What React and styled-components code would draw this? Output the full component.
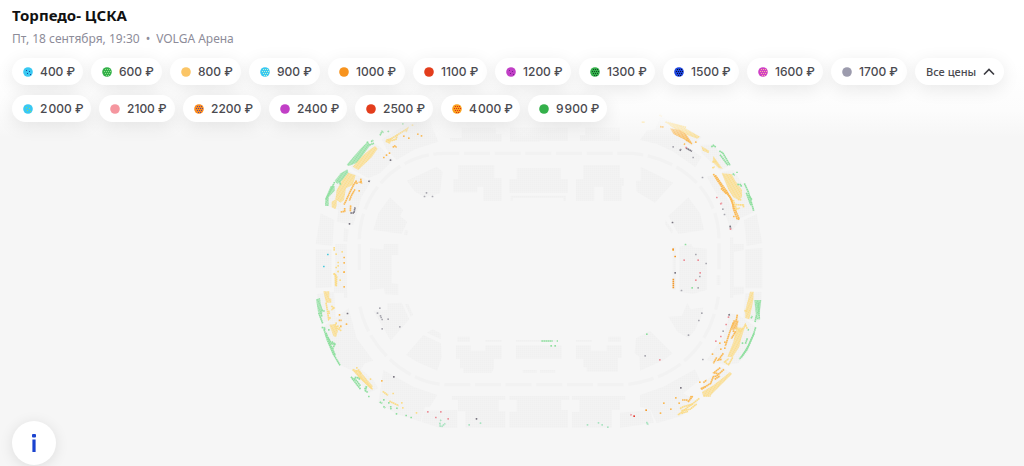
import React from "react";
import styled, { createGlobalStyle } from "styled-components";

const GlobalStyle = createGlobalStyle`
  * { box-sizing: border-box; }
  body {
    margin: 0;
    background: #f6f6f6;
    font-family: "Noto Sans", "Open Sans", sans-serif;
    color: #111;
  }
`;

const Page = styled.main`
  display: grid;
  min-height: 100vh;
  > * { grid-area: 1 / 1; }
`;

const MapArea = styled.section`
  display: flex;
  justify-content: center;
  align-items: flex-start;
  padding: 110px 0 0 56px;
`;

const Arena = styled.svg`
  width: 480px;
  height: auto;
  flex: none;
`;

const Header = styled.header`
  align-self: start;
  z-index: 1;
  padding: 4px 12px 16px;
  background: linear-gradient(#fff 0%, #fff 45%, #fcfcfc 80%, rgba(246, 246, 246, 0) 100%);
`;

const Title = styled.h1`
  margin: 0;
  font-size: 15px;
  line-height: 22px;
  font-weight: 700;
`;

const Details = styled.p`
  display: flex;
  gap: 6px;
  margin: 0 0 8px;
  padding-top: 2px;
  font-size: 12px;
  line-height: 22px;
  color: #8d8c99;
`;

const Prices = styled.div`
  display: flex;
  flex-wrap: wrap;
  gap: 10px 8px;
`;

const Chip = styled.button`
  display: flex;
  align-items: center;
  gap: 7px;
  width: ${(p) => p.$width}px;
  height: 27px;
  padding: 0 0 0 11px;
  border: 0;
  border-radius: 14px;
  background: #fff;
  box-shadow: 0 4px 18px rgba(0, 0, 0, 0.09);
  font: 500 12px/20px Inter, "Noto Sans", sans-serif;
  color: #4a4a50;
  white-space: nowrap;
  cursor: pointer;
`;

const AllPrices = styled(Chip)`
  font: 500 11px/20px "Noto Sans", "Open Sans", sans-serif;
`;

const Swatch = styled.svg`
  width: 10px;
  height: 10px;
  flex: none;
`;

const Chevron = styled.svg`
  width: 12px;
  height: 8px;
  flex: none;
`;

const InfoButton = styled.button`
  align-self: end;
  z-index: 1;
  display: flex;
  align-items: center;
  justify-content: center;
  width: 44px;
  height: 44px;
  margin: 0 0 1px 12px;
  padding: 0;
  border: 0;
  border-radius: 50%;
  background: #fff;
  box-shadow: 0 2px 14px rgba(0, 0, 0, 0.1);
  cursor: pointer;
`;

const prices = [
  ["400", 71, "#38c8f2", "#17459b", 1],
  ["600", 71, "#34b04a", "#8fe08a", 2],
  ["800", 71, "#fbc566"],
  ["900", 71, "#38c8f2", "#c4f4cf", 2],
  ["1000", 77, "#f7931e"],
  ["1100", 74, "#e33d1c"],
  ["1200", 76, "#c13fc6", "#74238c", 1],
  ["1300", 76, "#34b04a", "#0f4a24", 2],
  ["1500", 76, "#1b43dc", "#0b1030", 2],
  ["1600", 76, "#cf3fc6", "#fbb49a", 2],
  ["1700", 76, "#9c9bad"],
];

const morePrices = [
  ["2 000", 79, "#38c8f2", "#8fdc6c", 1],
  ["2100", 76, "#f5969f"],
  ["2200", 78, "#f98a1e", "#5b4a90", 2],
  ["2400", 78, "#c13fc6"],
  ["2500", 78, "#e33d1c"],
  ["4 000", 79, "#f9a11e", "#dc2c1c", 2],
  ["9 900", 79, "#34b04a"],
];

const specks = {
  1: [[3, 3], [6, 4], [4, 6.5], [7, 7]],
  2: [[3, 2], [5, 2], [7, 2], [2, 4], [4, 4], [6, 4], [8, 4], [3, 6], [5, 6], [7, 6], [4, 8], [6, 8]],
};

function PriceChip({ item }) {
  const [label, width, color, speck, density] = item;
  return (
    <Chip type="button" $width={width}>
      <Swatch viewBox="0 0 10 10" aria-hidden="true">
        <circle cx="5" cy="5" r="4.8" fill={color} />
        {speck && specks[density].map(([x, y]) => (
          <rect key={`${x}-${y}`} x={Math.floor(x)} y={Math.floor(y)} width="1" height="1" fill={speck} />
        ))}
      </Swatch>
      {label.replace(" ", "\u200a")} ₽
    </Chip>
  );
}

const tones = {
  green: "#8fdf9f",
  yellow: "#fbdc88",
  orange: "#fab954",
  amber: "#f2982b",
  grey: "#a9a8b0",
  dark: "#7a7681",
  red: "#ec8f98",
  scarlet: "#e5392d",
  cyan: "#4cc9dd",
  mint: "#a9e3c1",
};

/* Each quarter of the hall: closed sections, filled seat blocks, seat rows and single seats. */
const quarters = [
  {
    at: [0, 0],
    angle: -56,
    sections: [
      "245,88 300,55 385,20 415,95 345,118 290,150 262,122",
      "150,165 215,95 240,110 280,150 240,190 205,205 160,180",
      "75,285 95,235 140,180 212,215 185,260 160,345 110,335 115,300",
      "62,310 103,330 97,408 47,402",
      "47,418 95,418 95,495 47,495",
      "105,402 140,402 140,495 105,495",
      "132,355 146,358 142,396 130,394",
      "320,212 410,170 428,185 420,250 375,262 345,245",
      "270,262 310,300 300,318 322,335 305,372 220,360 235,310",
      "315,360 325,362 322,376 312,374",
      "210,415 250,418 252,402 295,402 295,435 275,435 275,495 210,495",
      "475,165 583,165 583,205 605,205 605,272 550,272 550,230 532,230 532,247 460,247 460,207 475,207",
      "650,175 720,175 720,248 628,248 628,207 650,207",
      "632,257 720,257 720,264 638,264 638,272 632,272",
      "485,52 588,52 588,72 605,72 605,95 450,95 450,84 485,84",
      "630,52 720,52 720,95 630,95",
    ],
    blocks: [
      ["green", "180,118 202,96 212,104 172,158 146,168 140,164"],
      ["yellow", "205,122 225,108 233,116 215,142 175,180 158,170 185,140"],
      ["green", "122,190 142,178 145,188 128,210 112,222 104,212"],
      ["green", "92,228 104,228 104,242 86,262 86,288 75,288 76,265"],
      ["yellow", "145,188 167,196 158,225 138,235 132,270 122,278 106,268 110,240 125,212"],
      ["yellow", "95,275 110,266 110,285 106,298 95,292"],
      ["yellow", "258,88 276,84 270,102 256,96"],
    ],
    rows: [
      ["green", "200,96 206,98"], ["green", "213,95 220,91"], ["green", "208,105 222,100"],
      ["green", "104,216 92,240 78,270"],
      ["green", "240,76 246,64 251,68"], ["green", "263,66 267,62"], ["green", "118,212 122,225"],
      ["yellow", "264,92 290,76 322,56 318,66"], ["yellow", "274,92 288,88 292,75"],
      ["orange", "278,112 284,108 290,112"], ["orange", "182,206 184,218 176,216"],
      ["orange", "160,226 168,214 172,222"], ["orange", "160,226 148,250 138,272 132,284"],
      ["orange", "165,238 155,255 148,272"], ["orange", "152,286 151,305"],
      ["orange", "122,306 134,304 134,294"], ["dark", "206,216 209,210"],
      ["dark", "151,309 162,309 165,292"],
    ],
    seats: {
      green: [[309, 42]],
      yellow: [[338, 46], [103, 414], [103, 420], [109, 433], [127, 426], [109, 473], [115, 458], [115, 468], [115, 485], [103, 493]],
      orange: [[312, 79], [327, 85], [354, 73], [365, 78], [252, 143], [260, 136], [269, 130], [178, 243], [133, 443], [133, 459], [133, 487]],
      dark: [[272, 151], [149, 342]],
      grey: [[374, 260], [398, 260], [380, 249]],
      cyan: [[84, 434], [72, 470]],
    },
  },
  {
    at: [720, 0],
    angle: 60,
    sections: [
      "345,58 362,20 440,55 485,82 455,108 425,100 340,100 300,90 320,62",
      "330,92 425,100 485,140 466,172 400,125",
      "480,104 520,104 572,165 540,182 485,130",
      "545,185 580,180 620,240 645,305 600,325 570,270",
      "500,200 520,195 600,330 575,365 540,270",
      "612,330 650,312 667,400 620,408",
      "616,418 667,414 667,495 616,495",
      "580,402 612,402 612,420 582,426 582,495 570,495 570,382 580,382",
      "302,170 400,218 375,245 345,278 290,245 288,212 302,212",
      "445,262 480,310 492,360 415,372 385,318",
      "376,330 398,360 396,372 375,342",
      "418,410 455,402 458,412 500,416 500,495 418,495",
      "398,410 408,410 408,495 398,495",
      "0,175 62,175 62,207 84,207 84,248 0,248",
      "0,257 78,257 78,272 70,272 70,264 0,264",
      "130,165 240,165 240,205 252,205 252,228 245,228 245,272 190,272 190,230 163,230 163,272 108,272 108,207 130,207",
      "0,52 84,52 84,92 0,92",
      "135,52 240,52 240,92 120,92 120,75 135,75",
    ],
    blocks: [
      ["yellow", "376,36 420,46 480,80 472,86 440,74 400,54"],
      ["orange", "390,55 420,60 438,72 456,98 440,92 400,72"],
      ["yellow", "484,108 508,122 506,130 488,122"],
      ["yellow", "520,138 548,176 536,174 518,155"],
      ["yellow", "545,190 575,192 586,212 606,240 606,262 596,270 580,262 566,240"],
    ],
    rows: [
      ["yellow", "358,15 366,19"], ["yellow", "376,36 400,42 438,52"],
      ["orange", "360,50 371,51"], ["orange", "432,101 435,104"], ["orange", "438,90 456,101"], ["orange", "465,96 471,97"],
      ["green", "514,111 520,106 528,112"], ["green", "538,123 548,128 570,166"], ["green", "540,134 564,166"],
      ["green", "578,191 584,196"], ["green", "591,185 591,189"], ["green", "592,223 603,224 604,231"],
      ["green", "613,220 625,246 641,302"], ["green", "619,248 633,286"], ["green", "626,255 636,270"],
      ["yellow", "517,156 528,154"], ["yellow", "517,174 524,170"],
      ["orange", "520,192 546,232 570,262 598,328"], ["orange", "526,196 560,244 576,270"], ["orange", "543,235 560,252"],
      ["orange", "576,270 580,295 591,326 598,328"],
      ["yellow", "580,270 590,300"], ["yellow", "594,268 604,270"], ["yellow", "588,284 610,285 611,293"], ["yellow", "586,298 600,294"],
      ["dark", "438,114 456,124"], ["dark", "419,122 424,117"], ["red", "541,283 546,278"], ["dark", "570,347 572,356"],
    ],
    seats: {
      yellow: [[308, 37], [312, 37]],
      orange: [[400, 421], [582, 320]],
      amber: [[400, 418], [406, 440], [406, 490]],
      grey: [[400, 111], [460, 143], [488, 203], [554, 314], [549, 298], [468, 434], [499, 461]],
      red: [[531, 263], [439, 113], [572, 358], [433, 451], [475, 451], [481, 490]],
      dark: [[398, 338]],
      green: [[437, 404]],
    },
  },
  {
    at: [0, 480],
    angle: 62,
    sections: [
      "47,15 95,15 95,52 47,55",
      "102,15 140,15 142,84 132,84 132,68 102,68",
      "50,72 102,66 108,150 68,158",
      "68,170 146,115 170,205 220,272 195,280 175,310 120,285",
      "155,295 175,290 220,330 235,355 215,365 200,370",
      "250,300 340,350 412,375 390,410 375,410 362,455 290,432 235,398",
      "372,422 472,420 472,474 420,474 365,456",
      "210,0 275,0 275,40 295,42 295,75 255,73 252,55 210,60",
      "262,100 305,98 328,148 272,212 220,122 262,120",
      "315,102 325,102 340,135 332,140",
      "318,255 370,195 423,220 425,262 412,302 350,275",
      "380,188 398,178 422,190 422,208",
      "468,226 512,226 512,242 556,242 556,226 605,226 605,266 582,266 582,295 575,308 490,308 490,295 480,295 480,266 468,266",
      "472,200 510,200 510,216 472,216",
      "556,210 605,210 605,216 556,216",
      "648,210 720,210 720,216 648,216",
      "648,226 720,226 720,266 648,266",
      "668,300 710,300 710,308 668,308",
      "456,378 616,378 616,390 596,390 596,424 616,424 616,473 496,473 496,424 474,424 474,390 456,390",
      "628,378 720,378 720,473 628,473 628,425 650,425 650,390 628,390",
    ],
    blocks: [
      ["yellow", "70,64 88,64 88,84 94,86 94,98 78,98"],
      ["green", "48,88 60,84 62,100 68,120 66,132 54,126"],
      ["yellow", "88,164 106,162 114,182 108,202 100,198"],
      ["yellow", "160,296 182,306 218,348 214,358 180,326"],
    ],
    rows: [
      ["yellow", "102,10 110,20 109,50"], ["yellow", "106,12 107,48"],
      ["yellow", "78,98 82,120 86,148 92,142"], ["yellow", "94,108 102,114 94,120"], ["yellow", "86,122 88,132"],
      ["green", "56,128 62,144 68,160"], ["green", "62,128 66,140"], ["green", "64,120 74,124"],
      ["green", "65,172 76,175 72,180"], ["green", "72,178 82,210 100,252 120,286"], ["green", "78,188 90,222 106,256"],
      ["green", "84,202 95,222 104,222"], ["green", "95,215 105,222 98,236"],
      ["yellow", "106,162 110,174 124,182"], ["yellow", "116,175 124,170"], ["orange", "116,151 125,151"], ["orange", "122,166 123,172"],
      ["green", "153,320 160,330 182,358"], ["green", "156,325 166,328 182,348"], ["green", "164,322 178,324 178,330"],
      ["green", "194,358 200,348 196,362 204,368"],
      ["yellow", "158,298 180,322 218,358"], ["yellow", "168,304 176,300 184,312"], ["yellow", "248,364 264,376"],
      ["yellow", "268,393 296,407"], ["green", "239,396 247,400"], ["green", "250,409 256,414"], ["green", "272,408 273,418"], ["green", "290,417 292,411"],
      ["mint", "420,452 424,450"], ["mint", "418,468 426,469 436,460"], ["mint", "419,458 421,466"],
    ],
    seats: {
      yellow: [[115, 5], [121, 31], [171, 294], [212, 328], [280, 371], [306, 399], [309, 414], [350, 429], [109, 160], [114, 169]],
      orange: [[133, 7], [133, 51], [119, 135], [140, 163], [246, 333]],
      dark: [[143, 131], [282, 321], [530, 447]],
      grey: [[240, 115], [233, 130], [242, 138], [244, 143], [247, 149], [265, 148], [247, 177], [300, 171]],
      green: [[207, 380], [252, 390], [267, 399], [290, 432], [319, 437], [334, 443], [87, 180]],
      red: [[384, 426], [423, 426], [408, 443], [445, 447]],
      mint: [[508, 465], [542, 460]],
    },
  },
  {
    at: [720, 480],
    angle: -62,
    sections: [
      "616,15 667,15 667,55 616,55",
      "570,0 582,0 582,50 612,50 612,72 580,75 580,84 570,84",
      "530,15 541,15 541,45 530,45",
      "616,70 665,65 664,110 655,158 610,145",
      "570,130 595,135 648,170 625,245 595,280 555,285 500,270 550,200",
      "490,340 545,290 575,310 510,380 485,375",
      "300,375 370,350 465,298 480,330 430,370 475,395 425,438 350,460 332,420 300,410",
      "240,428 330,420 342,458 240,474",
      "418,0 500,0 500,60 458,72 418,65",
      "398,0 408,0 408,60 398,60",
      "442,98 452,118 490,112 484,140 465,180 445,205 412,185 385,140 425,138",
      "288,205 330,182 398,250 372,270 300,302 298,260 284,250",
      "0,210 0,216 48,216 48,210",
      "0,226 65,226 65,266 0,266",
      "108,226 152,226 152,242 200,242 200,226 245,226 245,264 234,264 234,305 140,305 140,292 130,292 130,266 108,266",
      "108,210 156,210 156,216 108,216",
      "205,200 242,200 242,216 205,216",
      "0,300 46,300 46,308 0,308",
      "0,378 88,378 88,390 64,390 64,420 84,420 84,473 0,473",
      "96,378 256,378 256,390 240,390 240,420 216,420 216,473 96,473 96,426 118,426 118,390 96,390",
    ],
    blocks: [
      ["yellow", "630,65 641,65 640,90 634,120 628,148 616,144 616,120"],
      ["green", "643,90 664,90 660,120 655,140 647,130"],
      ["yellow", "590,172 614,174 604,205 598,230 578,262 562,260 580,215"],
      ["orange", "580,150 596,152 590,178 575,180"],
      ["yellow", "570,306 576,312 512,376 490,378 486,366 520,346 545,326"],
    ],
    rows: [
      ["yellow", "613,122 622,124"], ["green", "633,145 637,138"], ["green", "645,156 649,138 655,148"], ["green", "655,98 658,148"],
      ["green", "647,172 640,195 620,240 598,268"], ["green", "642,190 625,228 604,262"], ["green", "622,205 616,222"], ["green", "623,179 627,180"],
      ["yellow", "590,174 600,184 612,172 616,164 622,176"], ["yellow", "578,262 566,284 554,276 566,266"],
      ["orange", "592,134 588,155"], ["orange", "580,158 568,190 556,228"], ["orange", "578,182 586,186 574,206"],
      ["orange", "550,250 535,270 545,268"], ["orange", "530,262 520,280"], ["orange", "552,298 530,318 520,320 512,340 484,358"],
      ["orange", "541,293 522,308 536,312"], ["orange", "524,328 540,318"], ["orange", "482,356 496,350"], ["orange", "490,338 500,330"],
      ["yellow", "490,378 512,378"], ["yellow", "478,385 462,398 440,414 416,434"], ["yellow", "420,416 430,410 460,402"],
      ["yellow", "424,422 450,418 470,402"], ["yellow", "424,430 444,424"],
      ["orange", "426,390 440,390 446,394 458,378"], ["orange", "454,378 450,386"],
      ["green", "4,213 38,213"], ["green", "50,213 54,213"], ["amber", "400,26 400,56"],
      ["mint", "320,460 326,464"], ["red", "271,434 275,435"], ["dark", "567,132 568,137"],
    ],
    seats: {
      green: [[34, 228], [46, 228], [321, 193], [608, 220], [457, 54]],
      orange: [[540, 220], [555, 217], [555, 235], [543, 238], [518, 253], [480, 337], [408, 384], [418, 400], [372, 400], [393, 418], [362, 430]],
      yellow: [[416, 434]],
      amber: [[319, 421]],
      dark: [[406, 9], [423, 354]],
      grey: [[480, 20], [475, 54], [425, 62], [486, 130], [477, 152], [446, 196], [489, 269], [316, 258], [550, 184]],
      red: [[481, 9], [468, 31], [566, 142], [559, 164], [543, 200], [528, 214], [360, 270]],
      scarlet: [[283, 439]],
      mint: [[321, 458], [143, 465], [176, 459], [187, 465], [204, 472]],
    },
  },
];

function ArenaMap() {
  return (
    <Arena viewBox="0 0 1440 975" role="img" aria-label="VOLGA Арена">
      <defs>
        <pattern id="closed" width="6" height="6" patternUnits="userSpaceOnUse">
          <rect width="6" height="6" fill="#f4f4f4" />
          <rect width="4" height="4" fill="#f0f0f0" />
        </pattern>
        {quarters.map(({ angle }) =>
          ["green", "yellow", "orange"].map((tone) => (
            <pattern
              key={tone + angle}
              id={tone + angle}
              width="6"
              height="8"
              patternUnits="userSpaceOnUse"
              patternTransform={`rotate(${angle})`}
            >
              <rect width="6" height="8" fill={tones[tone]} opacity="0.35" />
              <rect x="0" y="1" width="5" height="6" fill={tones[tone]} />
            </pattern>
          ))
        )}
      </defs>
      <g fill="none" stroke="#f2f2f2" strokeWidth="10">
        <path strokeDasharray="78 14" d="M178 480V390C180 240 300 130 435 130H1000C1140 145 1257 240 1257 390V480" />
        <path strokeDasharray="78 14" d="M180 590C205 720 330 824 440 824H975C1120 810 1230 720 1255 560" />
      </g>
      {quarters.map(({ at, angle, sections, blocks, rows, seats }) => (
        <g key={at.join()} transform={`translate(${at[0]} ${at[1]})`}>
          {sections.map((points) => <polygon key={points} points={points} fill="url(#closed)" />)}
          {blocks.map(([tone, points]) => <polygon key={points} points={points} fill={`url(#${tone}${angle})`} />)}
          {rows.map(([tone, points]) => (
            <polyline
              key={points}
              points={points}
              fill="none"
              stroke={tones[tone]}
              strokeWidth="5"
              strokeDasharray="5 1"
            />
          ))}
          {Object.entries(seats).map(([tone, list]) =>
            list.map(([x, y]) => (
              <rect key={`${tone}${x}-${y}`} x={x - 3} y={y - 3} width="5" height="5" rx="1" fill={tones[tone]} />
            ))
          )}
        </g>
      ))}
    </Arena>
  );
}

export default function App() {
  return (
    <Page>
      <GlobalStyle />
      <MapArea>
        <ArenaMap />
      </MapArea>
      <Header>
        <Title>Торпедо- ЦСКА</Title>
        <Details>
          <span>Пт, 18 сентября, 19:30</span>
          <span>•</span>
          <span>VOLGA Арена</span>
        </Details>
        <Prices>
          {prices.map((item) => <PriceChip key={item[0]} item={item} />)}
          <AllPrices type="button" $width={89} aria-expanded="true">
            Все цены
            <Chevron viewBox="0 0 12 8" fill="none" stroke="#3c3c42" strokeWidth="1.6" aria-hidden="true">
              <path d="M1 6.5 6 1.5l5 5" />
            </Chevron>
          </AllPrices>
          {morePrices.map((item) => <PriceChip key={item[0]} item={item} />)}
        </Prices>
      </Header>
      <InfoButton type="button" aria-label="Информация">
        <svg width="6" height="20" viewBox="0 0 6 20" fill="#1b43cf" aria-hidden="true">
          <rect x="1" y="1" width="4" height="3.4" rx="1" />
          <rect x="1.4" y="6.5" width="3.2" height="12.5" />
        </svg>
      </InfoButton>
    </Page>
  );
}
